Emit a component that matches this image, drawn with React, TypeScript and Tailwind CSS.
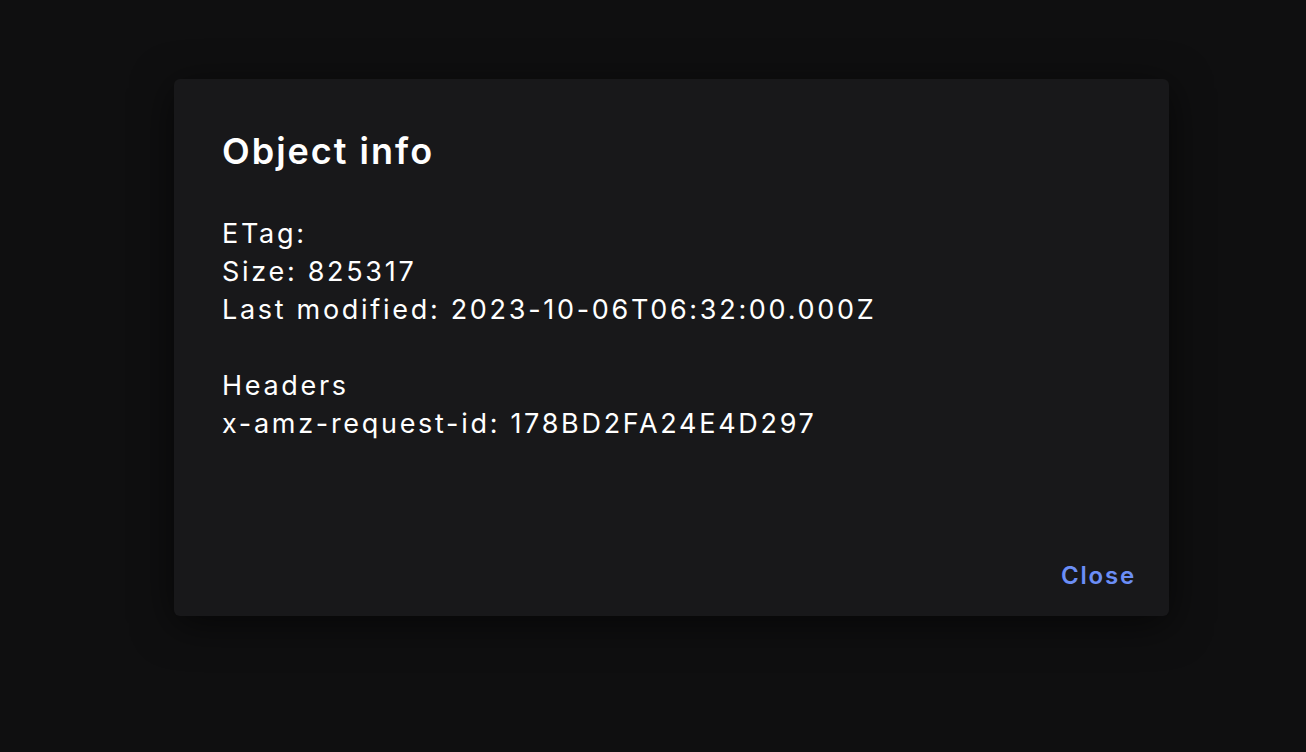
export default function App() {
  const lines = [
    'ETag:',
    'Size: 825317',
    'Last modified: 2023-10-06T06:32:00.000Z',
    '',
    'Headers',
    'x-amz-request-id: 178BD2FA24E4D297',
  ];

  return (
    <div className="min-h-[752px] w-full bg-[#0f0f10] pl-[174px] pt-[79px] font-['Inter',sans-serif] text-white">
      <div className="flex h-[537px] w-[995px] flex-col rounded-md bg-[#18181a] shadow-[0_8px_40px_rgba(0,0,0,0.6)]">
        <div className="flex-1 px-12 pt-[50px]">
          <h2 className="text-[36px] font-semibold leading-[44px] tracking-[2px]">Object info</h2>
          <div className="mt-[42px] text-[27px] leading-[38px] tracking-[2.7px]">
            {lines.map((line, i) => (
              <div key={i} className="h-[38px]">
                {line}
              </div>
            ))}
          </div>
        </div>
        <div className="flex justify-end pb-[28px] pr-[33px]">
          <button className="text-[24px] font-semibold leading-[24px] tracking-[1.8px] text-[#6b8ef6]">Close</button>
        </div>
      </div>
    </div>
  );
}
